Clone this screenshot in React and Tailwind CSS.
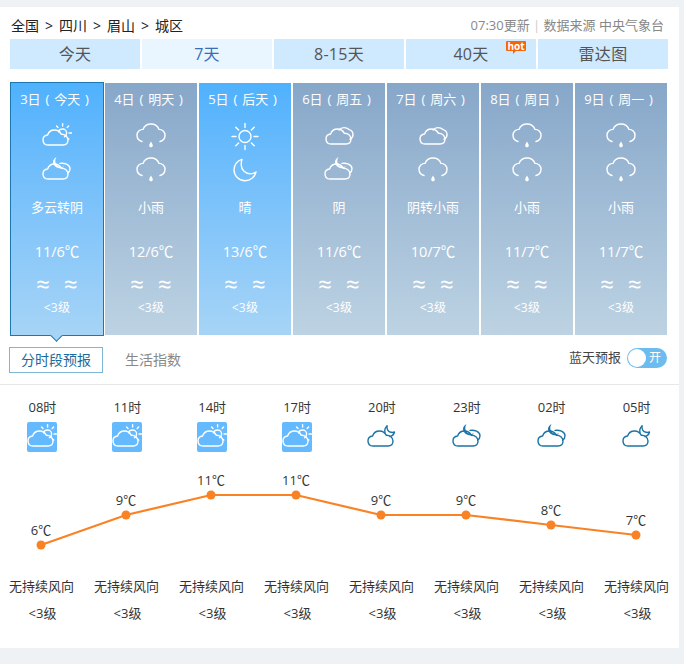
import React from 'react';

const font = { fontFamily: '"Open Sans", "Noto Sans CJK SC", sans-serif' };

const tabs = ['今天', '7天', '8-15天', '40天', '雷达图'];
const crumbs = ['全国', '四川', '眉山', '城区'];

const days = [
  { date: '3日 ( 今天 )', icons: ['cloudSun', 'cloudMoon'], desc: '多云转阴', temp: '11/6℃', blue: true, active: true },
  { date: '4日 ( 明天 )', icons: ['rain', 'rain'], desc: '小雨', temp: '12/6℃' },
  { date: '5日 ( 后天 )', icons: ['sun', 'moon'], desc: '晴', temp: '13/6℃', blue: true },
  { date: '6日 ( 周五 )', icons: ['overcast', 'cloudMoon'], desc: '阴', temp: '11/6℃' },
  { date: '7日 ( 周六 )', icons: ['overcast', 'rain'], desc: '阴转小雨', temp: '10/7℃' },
  { date: '8日 ( 周日 )', icons: ['rain', 'rain'], desc: '小雨', temp: '11/7℃' },
  { date: '9日 ( 周一 )', icons: ['rain', 'rain'], desc: '小雨', temp: '11/7℃' },
];

const hours = [
  { time: '08时', icon: 'cloudSun', tile: true, temp: 6, x: 41, y: 85 },
  { time: '11时', icon: 'cloudSun', tile: true, temp: 9, x: 126, y: 55 },
  { time: '14时', icon: 'cloudSun', tile: true, temp: 11, x: 211, y: 35 },
  { time: '17时', icon: 'cloudSun', tile: true, temp: 11, x: 296, y: 35 },
  { time: '20时', icon: 'nightCloud', temp: 9, x: 381, y: 55 },
  { time: '23时', icon: 'cloudMoonDark', temp: 9, x: 466, y: 55 },
  { time: '02时', icon: 'cloudMoonDark', temp: 8, x: 551, y: 65 },
  { time: '05时', icon: 'nightCloud', temp: 7, x: 636, y: 75 },
];

const CLOUD = 'M6 24C3 24 1 22 1 19C1 16.2 3 14.2 5.6 14C6.6 11 9.4 9 12.5 9C15.4 9 18 10.6 19.2 13.2C22.8 13 26 15.4 26 19C26 22 24 24 21 24Z';
const CRESCENT = 'M14.5 2C12.5 5 13 9 16 11C18 12.2 20 12.2 22 11.2C20.6 13 18.2 13.6 16 13C12.8 12 11 9.6 11 7C11 5 12.4 3 14.5 2Z';

function Icon({ name, className }) {
  const common = { fill: 'none', stroke: 'currentColor', strokeWidth: 1.4, strokeLinecap: 'round', strokeLinejoin: 'round' };
  return (
    <svg viewBox="0 0 30 30" className={className} {...common}>
      {name === 'rain' && (
        <>
          <path d="M6 20.5C3 19.6 1 17.2 1 14.2C1 10.8 3.8 8.4 7 8.4C8.2 5.2 11.2 3 15 3C18.8 3 21.8 5.2 23 8.4C26.2 8.4 29 10.8 29 14.2C29 17.2 27 19.6 24 20.5" />
          <path d="M15 20.5C14 22.4 13.2 23.4 13.2 24.4C13.2 25.4 14 26.2 15 26.2C16 26.2 16.8 25.4 16.8 24.4C16.8 23.4 16 22.4 15 20.5Z" fill="currentColor" stroke="none" />
        </>
      )}
      {name === 'sun' && (
        <>
          <circle cx="15" cy="15.5" r="6" />
          <path d="M15 2.5V6.5M15 24.5V28.5M2 15.5H6M24 15.5H28M5.8 6.3L8.6 9.1M21.4 21.9L24.2 24.7M24.2 6.3L21.4 9.1M8.6 21.9L5.8 24.7" />
        </>
      )}
      {name === 'moon' && (
        <path d="M12 4.4C7.4 5.6 4 9.8 4 14.8C4 20.8 8.9 25.7 15 25.7C20.4 25.7 24.8 22 26 17C24.4 18.2 22.4 18.9 20.4 18.9C15.6 18.9 11.2 15 11.2 9.8C11.2 7.8 11.4 6 12 4.4Z" />
      )}
      {name === 'overcast' && (
        <>
          <path d={CLOUD} transform="translate(1 -1)" />
          <path d="M15 9C16.2 7.4 18 6.6 20 6.6C22 6.6 23.6 7.2 25 8.6C27.4 9.2 29 11 29 13.4C29 15.6 27.8 17.4 26 18.2" />
        </>
      )}
      {name === 'cloudSun' && (
        <>
          <path d={CLOUD} />
          <path d="M16.6 10.8C17 9.2 18.6 8 20.6 8C22.8 8 24.6 9.8 24.6 12C24.6 13.8 23.6 15.2 22.4 15.8" />
          <path d="M20.6 2.6V5M14.6 5L16 6.4M26.6 5L25.2 6.4M27 12H29.4M25.2 16.8L26.8 18" />
        </>
      )}
      {(name === 'cloudMoon' || name === 'cloudMoonDark') && (
        <>
          <path d={CLOUD} />
          <path d="M18 8.4C22 7.6 28 9.6 28 13.8C28 15.8 27 17.4 25.6 18.2" />
          <path d={CRESCENT} fill="currentColor" stroke="none" />
        </>
      )}
      {name === 'nightCloud' && (
        <>
          <path d={CLOUD} />
          <path d="M20 4C19.5 7 21 10 24 10.3C25 10.5 26.5 10.5 27.5 10C27 12.5 25 14 23 14.5" />
          <path d="M20 4C18 6 17.4 8.4 18 10.4" />
        </>
      )}
    </svg>
  );
}

function DayCard({ day }) {
  const bg = day.blue ? 'bg-gradient-to-b from-[#4fb1fd] to-[#a6d4f6]' : 'bg-gradient-to-b from-[#87a7c9] to-[#bdd3e3]';
  const size = day.active ? 'w-[94px] h-[254px] -my-px border border-[#1d78b0] pt-[6px]' : 'w-[92px] h-[252px] pt-[6px]';
  return (
    <div className={`relative flex flex-col items-center shrink-0 text-white ${bg} ${size}`}>
      <div className="text-[13px] leading-5 whitespace-nowrap [word-spacing:1.5px] -ml-[5px]">{day.date}</div>
      <Icon name={day.icons[0]} className="w-[30px] h-[30px] mt-[12px]" />
      <Icon name={day.icons[1]} className="w-[30px] h-[30px] mt-1" />
      <div className="text-[13px] leading-5 mt-3">{day.desc}</div>
      <div className="text-[14.5px] leading-5 mt-[25px]">{day.temp}</div>
      <div className="flex gap-[14px] text-[24px] leading-5 mt-3">
        <span>≈</span>
        <span>≈</span>
      </div>
      <div className="text-[12px] leading-4 mt-[6px] tracking-[0.3px]">&lt;3级</div>
      {day.active && (
        <div className="absolute -bottom-[5px] left-[41px] w-[9px] h-[9px] rotate-45 bg-[#a6d4f6] border-r border-b border-[#1d78b0]"></div>
      )}
    </div>
  );
}

export default function App() {
  return (
    <div className="w-[684px] h-[664px] bg-[#eef2f5] pt-[7px] overflow-hidden" style={font}>
      <div className="w-[679px] h-[641px] bg-white">
        {/* Top line */}
        <div className="flex items-center justify-between h-[32px] pt-[5px] pl-[11px] pr-[15px]">
          <div className="flex gap-[6px] text-[14px] text-[#222] whitespace-nowrap">
            {crumbs.map((crumb, i) => (
              <React.Fragment key={crumb}>
                {i > 0 && <span>&gt;</span>}
                <span>{crumb}</span>
              </React.Fragment>
            ))}
          </div>
          <div className="text-[13px] text-[#888] whitespace-nowrap">
            07:30更新 <span className="text-[#ccc]">|</span> 数据来源 中央气象台
          </div>
        </div>

        {/* Tabs */}
        <div className="flex gap-[2px] pl-[10px]">
          {tabs.map((tab) => (
            <div
              key={tab}
              className={`relative w-[130px] h-[30px] flex items-center justify-center text-[16px] tracking-[0.3px] ${tab === '7天' ? 'bg-[#e9f5ff] text-[#3a6fb5]' : 'bg-[#cfe9ff] text-[#555]'}`}
            >
              {tab}
              {tab === '40天' && (
                <span className="absolute left-[100px] top-[2px] w-[20px] h-[10px] bg-[#f5650a] rounded-[1px] text-white text-[10px] leading-[10px] font-bold text-center tracking-normal">
                  hot
                  <span className="absolute left-[7px] top-[10px] border-t-[3px] border-r-[3px] border-t-[#f5650a] border-r-transparent"></span>
                </span>
              )}
            </div>
          ))}
        </div>

        {/* 7 days */}
        <div className="flex gap-[2px] pl-[10px] mt-[14px] items-start">
          <DayCard day={days[0]} />
          <div className="flex gap-[2px] -ml-px">
            {days.slice(1).map((day) => (
              <DayCard key={day.date} day={day} />
            ))}
          </div>
        </div>

        {/* Sub tabs */}
        <div className="flex items-center h-[50px] border-b border-[#e8e8e8] pl-[9px] pr-[12px]">
          <div className="w-[94px] h-[26px] border border-[#7fb5d6] text-[#1a6a9a] text-[14px] flex items-center justify-center">分时段预报</div>
          <div className="ml-[22px] text-[14px] text-[#888]">生活指数</div>
          <div className="ml-auto flex items-center gap-[6px] -mt-[3px]">
            <span className="text-[13px] text-[#444]">蓝天预报</span>
            <div className="relative w-[40px] h-[20px] rounded-full bg-[#6cbcf0] text-white text-[12px] leading-[20px] pl-[22px]">
              开
              <span className="absolute left-[1px] top-[1px] w-[18px] h-[18px] rounded-full bg-white"></span>
            </div>
          </div>
        </div>

        {/* Hourly */}
        <div className="flex mt-[12px]">
          {hours.map((hour) => (
            <div key={hour.time} className="w-[85px] flex flex-col items-center">
              <div className="text-[13px] leading-5 text-[#333]">{hour.time}</div>
              {hour.tile ? (
                <div className="w-[30px] h-[30px] mt-[5px] rounded-[2px] bg-[#64b9ff] text-white">
                  <Icon name={hour.icon} className="w-[30px] h-[30px]" />
                </div>
              ) : (
                <Icon name={hour.icon} className="w-[30px] h-[30px] mt-[5px] text-[#1a74a5]" />
              )}
            </div>
          ))}
        </div>

        <svg viewBox="0 0 680 100" className="block w-[680px] h-[100px] mt-[8px]">
          <polyline
            points={hours.map((h) => `${h.x},${h.y}`).join(' ')}
            fill="none"
            stroke="#f98225"
            strokeWidth="2.2"
          />
          {hours.map((h) => (
            <g key={h.time}>
              <circle cx={h.x} cy={h.y} r="4.5" fill="#f98225" />
              <text x={h.x} y={h.y - 10} textAnchor="middle" fontSize="13" fill="#333">
                {h.temp}℃
              </text>
            </g>
          ))}
        </svg>

        <div className="flex mt-[16px] -ml-px">
          {hours.map((hour) => (
            <div key={hour.time} className="w-[85px] flex flex-col items-center text-[13px] text-[#333]">
              <div className="leading-5">无持续风向</div>
              <div className="leading-5 mt-[7px] ml-[2px]">&lt;3级</div>
            </div>
          ))}
        </div>
      </div>
    </div>
  );
}
